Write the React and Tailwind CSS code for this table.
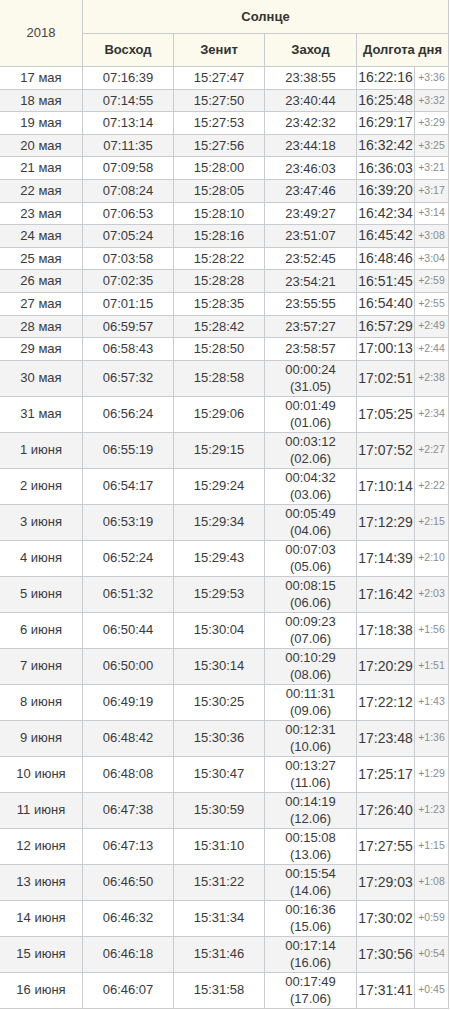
const rows = [
  ["17 мая", "07:16:39", "15:27:47", "23:38:55", null, "16:22:16", "+3:36"],
  ["18 мая", "07:14:55", "15:27:50", "23:40:44", null, "16:25:48", "+3:32"],
  ["19 мая", "07:13:14", "15:27:53", "23:42:32", null, "16:29:17", "+3:29"],
  ["20 мая", "07:11:35", "15:27:56", "23:44:18", null, "16:32:42", "+3:25"],
  ["21 мая", "07:09:58", "15:28:00", "23:46:03", null, "16:36:03", "+3:21"],
  ["22 мая", "07:08:24", "15:28:05", "23:47:46", null, "16:39:20", "+3:17"],
  ["23 мая", "07:06:53", "15:28:10", "23:49:27", null, "16:42:34", "+3:14"],
  ["24 мая", "07:05:24", "15:28:16", "23:51:07", null, "16:45:42", "+3:08"],
  ["25 мая", "07:03:58", "15:28:22", "23:52:45", null, "16:48:46", "+3:04"],
  ["26 мая", "07:02:35", "15:28:28", "23:54:21", null, "16:51:45", "+2:59"],
  ["27 мая", "07:01:15", "15:28:35", "23:55:55", null, "16:54:40", "+2:55"],
  ["28 мая", "06:59:57", "15:28:42", "23:57:27", null, "16:57:29", "+2:49"],
  ["29 мая", "06:58:43", "15:28:50", "23:58:57", null, "17:00:13", "+2:44"],
  ["30 мая", "06:57:32", "15:28:58", "00:00:24", "31.05", "17:02:51", "+2:38"],
  ["31 мая", "06:56:24", "15:29:06", "00:01:49", "01.06", "17:05:25", "+2:34"],
  ["1 июня", "06:55:19", "15:29:15", "00:03:12", "02.06", "17:07:52", "+2:27"],
  ["2 июня", "06:54:17", "15:29:24", "00:04:32", "03.06", "17:10:14", "+2:22"],
  ["3 июня", "06:53:19", "15:29:34", "00:05:49", "04.06", "17:12:29", "+2:15"],
  ["4 июня", "06:52:24", "15:29:43", "00:07:03", "05.06", "17:14:39", "+2:10"],
  ["5 июня", "06:51:32", "15:29:53", "00:08:15", "06.06", "17:16:42", "+2:03"],
  ["6 июня", "06:50:44", "15:30:04", "00:09:23", "07.06", "17:18:38", "+1:56"],
  ["7 июня", "06:50:00", "15:30:14", "00:10:29", "08.06", "17:20:29", "+1:51"],
  ["8 июня", "06:49:19", "15:30:25", "00:11:31", "09.06", "17:22:12", "+1:43"],
  ["9 июня", "06:48:42", "15:30:36", "00:12:31", "10.06", "17:23:48", "+1:36"],
  ["10 июня", "06:48:08", "15:30:47", "00:13:27", "11.06", "17:25:17", "+1:29"],
  ["11 июня", "06:47:38", "15:30:59", "00:14:19", "12.06", "17:26:40", "+1:23"],
  ["12 июня", "06:47:13", "15:31:10", "00:15:08", "13.06", "17:27:55", "+1:15"],
  ["13 июня", "06:46:50", "15:31:22", "00:15:54", "14.06", "17:29:03", "+1:08"],
  ["14 июня", "06:46:32", "15:31:34", "00:16:36", "15.06", "17:30:02", "+0:59"],
  ["15 июня", "06:46:18", "15:31:46", "00:17:14", "16.06", "17:30:56", "+0:54"],
  ["16 июня", "06:46:07", "15:31:58", "00:17:49", "17.06", "17:31:41", "+0:45"],
];

function Cell({ children, className = "" }) {
  return (
    <td className={"border border-[#c8ccd1] text-center align-middle p-0 " + className}>
      {children}
    </td>
  );
}

export default function App() {
  return (
    <div className="w-[450px] h-[1010px] bg-white overflow-hidden font-['Liberation_Sans',Arial,sans-serif] text-[13px] text-[#3a3a3a]">
      <table className="table-fixed border-collapse w-[448px] -mt-px -ml-px">
        <colgroup>
          <col className="w-[83px]" />
          <col className="w-[91px]" />
          <col className="w-[91px]" />
          <col className="w-[92px]" />
          <col className="w-[58px]" />
          <col className="w-[34px]" />
        </colgroup>
        <thead>
          <tr className="h-[34px] bg-[#fbfaec]">
            <th rowSpan={2} className="border border-[#c8ccd1] font-normal text-[13px] text-[#444]">
              2018
            </th>
            <th colSpan={5} className="border border-[#c8ccd1] font-bold text-[13px] text-[#333]">
              Солнце
            </th>
          </tr>
          <tr className="h-[33px] bg-[#fbfaec]">
            <th className="border border-[#c8ccd1] font-bold text-[13px] text-[#333]">Восход</th>
            <th className="border border-[#c8ccd1] font-bold text-[13px] text-[#333]">Зенит</th>
            <th className="border border-[#c8ccd1] font-bold text-[13px] text-[#333]">Заход</th>
            <th colSpan={2} className="border border-[#c8ccd1] font-bold text-[13px] text-[#333] whitespace-nowrap">
              Долгота дня
            </th>
          </tr>
        </thead>
        <tbody>
          {rows.map((r, i) => (
            <tr
              key={r[0]}
              className={(r[4] ? "h-[36px] " : "h-[22.6px] ") + (i % 2 ? "bg-[#f3f3f3]" : "bg-white")}
            >
              <Cell>{r[0]}</Cell>
              <Cell>{r[1]}</Cell>
              <Cell>{r[2]}</Cell>
              <Cell className="leading-[17px]">
                {r[3]}
                {r[4] && (
                  <>
                    <br />({r[4]})
                  </>
                )}
              </Cell>
              <Cell className="text-[14px]">{r[5]}</Cell>
              <Cell className="text-[10.5px] text-[#8c8c8c]">{r[6]}</Cell>
            </tr>
          ))}
        </tbody>
      </table>
    </div>
  );
}
